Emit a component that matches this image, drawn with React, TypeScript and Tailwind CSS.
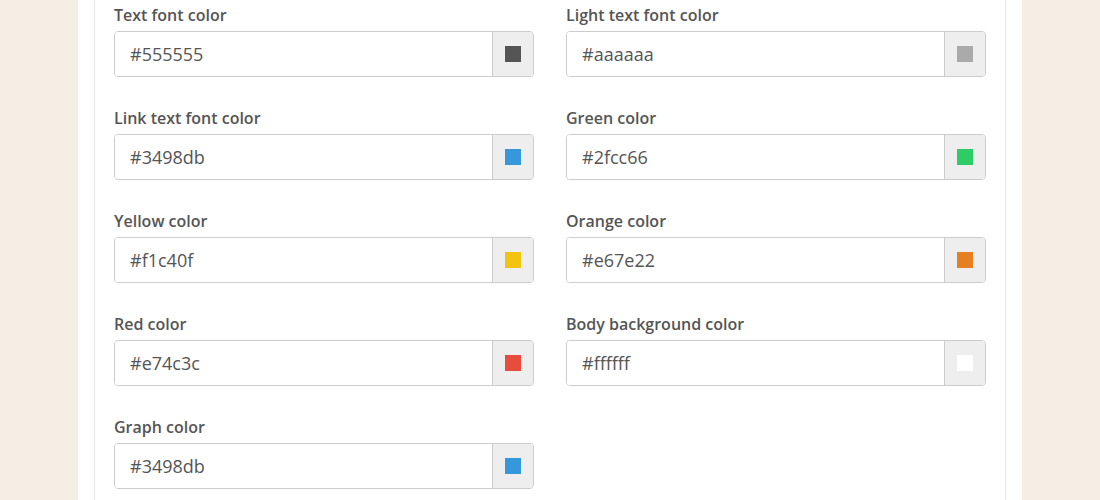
import React from "react";

const fields = [
  { label: "Text font color", value: "#555555" },
  { label: "Light text font color", value: "#aaaaaa" },
  { label: "Link text font color", value: "#3498db" },
  { label: "Green color", value: "#2fcc66" },
  { label: "Yellow color", value: "#f1c40f" },
  { label: "Orange color", value: "#e67e22" },
  { label: "Red color", value: "#e74c3c" },
  { label: "Body background color", value: "#ffffff" },
  { label: "Graph color", value: "#3498db" },
];

const ColorField = ({ label, value }: { label: string; value: string }) => {
  return (
    <div>
      <label className="block text-[16px] leading-[20px] font-semibold text-[#555] mb-[6px]">
        {label}
      </label>
      <div className="flex h-[46px] border border-[#ccc] rounded-[4px] overflow-hidden">
        <input
          className="flex-1 min-w-0 px-[15px] text-[18px] text-[#555] bg-white outline-none"
          value={value}
          readOnly
        />
        <span className="w-[41px] flex items-center justify-center bg-[#eee] border-l border-[#ccc]">
          <span className="block w-[16px] h-[16px]" style={{ backgroundColor: value }} />
        </span>
      </div>
    </div>
  );
};

export default function App() {
  return (
    <div
      className="min-h-[500px] bg-[#f5eee4] px-[78px]"
      style={{ fontFamily: '"Open Sans", "Liberation Sans", sans-serif' }}
    >
      <div className="bg-white px-[16px] min-h-[500px]">
        <div className="border-x border-[#e6e6e6] min-h-[500px] px-[19px] pt-[5px]">
          <div className="grid grid-cols-2 gap-x-[32px] gap-y-[31px]">
            {fields.map((f) => (
              <ColorField key={f.label} label={f.label} value={f.value} />
            ))}
          </div>
        </div>
      </div>
    </div>
  );
}
